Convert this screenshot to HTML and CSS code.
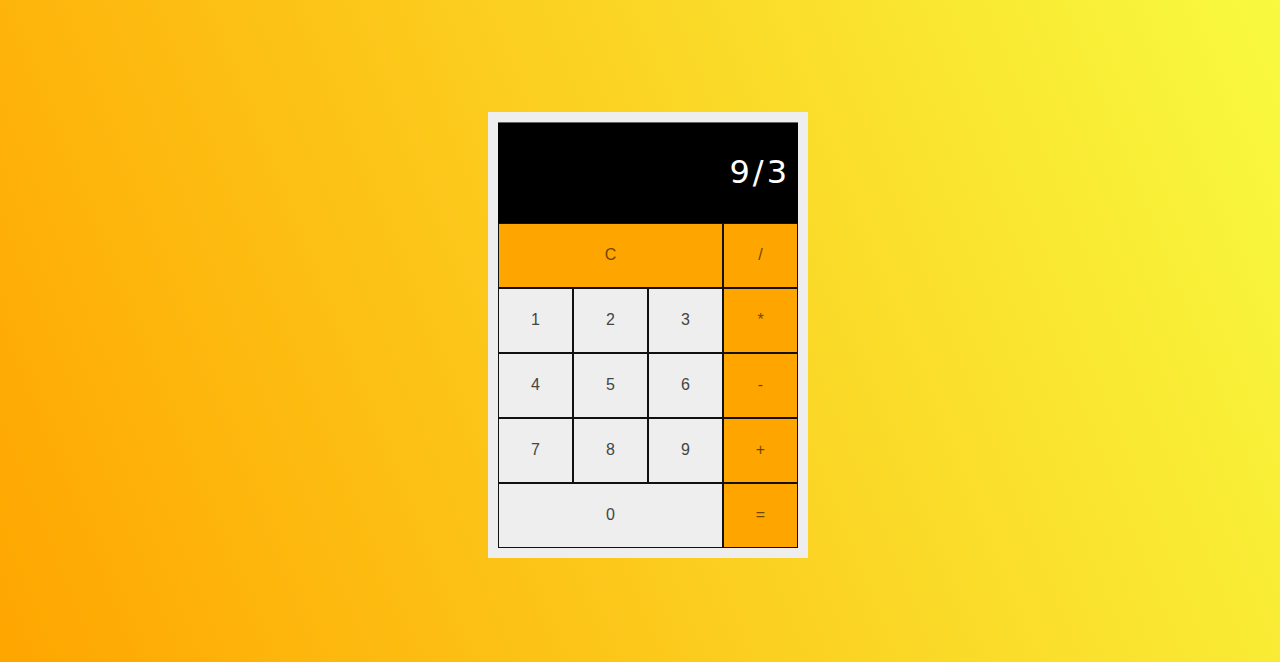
FILE: index.html
```html
<!DOCTYPE html>
<html lang="en">
<head>
<meta charset="utf-8">
<title>Calculator</title>
<link rel="stylesheet" href="styles.css">
</head>
<body>
<div class="calc">
  <div class="display">9/3</div>
  <div class="keys">
    <button class="key op wide">C</button>
    <button class="key op">/</button>
    <button class="key">1</button>
    <button class="key">2</button>
    <button class="key">3</button>
    <button class="key op">*</button>
    <button class="key">4</button>
    <button class="key">5</button>
    <button class="key">6</button>
    <button class="key op">-</button>
    <button class="key">7</button>
    <button class="key">8</button>
    <button class="key">9</button>
    <button class="key op">+</button>
    <button class="key wide">0</button>
    <button class="key op">=</button>
  </div>
</div>
</body>
</html>
```
FILE: styles.css
```css
html, body {
  margin: 0;
  height: 100%;
}
body {
  background: linear-gradient(68deg, #ffa500 0%, #f8fa40 100%);
  display: flex;
  justify-content: center;
  align-items: flex-start;
  padding: 112px 0 0 16px;
  box-sizing: border-box;
  font-family: "Liberation Sans", Arial, sans-serif;
}
.calc {
  background: #eeeeee;
  padding: 10px;
  width: 300px;
}
.display {
  background: #000;
  color: #fff;
  height: 101px;
  box-sizing: border-box;
  border-top: 1px solid #666;
  display: flex;
  align-items: center;
  justify-content: flex-end;
  padding: 0 8px 2px 0;
  font-family: "DejaVu Sans", sans-serif;
  font-size: 32px;
  letter-spacing: 3px;
}
.keys {
  display: grid;
  grid-template-columns: repeat(4, 75px);
  grid-auto-rows: 65px;
}
.key {
  margin: 0;
  border: 1px solid #111;
  background: #eeeeee;
  color: #444;
  font-family: "Liberation Sans", Arial, sans-serif;
  font-size: 16px;
  padding: 0 0 2px 0;
}
.key.op {
  background: #ffa500;
  color: #6e4600;
}
.key.wide {
  grid-column: span 3;
}
```
